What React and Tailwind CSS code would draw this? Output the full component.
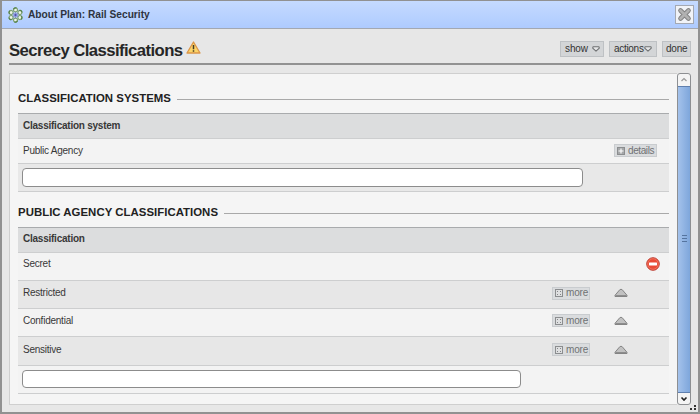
import React from "react";

function Flower() {
  const petals = [0, 60, 120, 180, 240, 300];
  return (
    <svg width="15" height="16" viewBox="-7.5 -8 15 16" className="shrink-0">
      {petals.map((a) => (
        <g key={a} transform={`rotate(${a})`}>
          <circle cx="0" cy="-5.1" r="2" fill="#eef5e8" stroke="#7fa274" strokeWidth="1.2" />
          <path d="M-1.9-5.6A2 2 0 0 1 1-6.9" fill="none" stroke="#54804b" strokeWidth="1.2" />
          <path d="M0-3.2V-1" stroke="#7486b8" strokeWidth="0.8" />
        </g>
      ))}
      <circle r="2" fill="#8a90d8" />
      <circle r="0.9" fill="#4c50a8" />
    </svg>
  );
}

function Warning() {
  return (
    <svg width="15" height="13" viewBox="0 0 15 13" className="shrink-0">
      <path d="M7.5 1L14 12H1Z" fill="#fcd569" stroke="#dc9648" strokeWidth="1.3" strokeLinejoin="round" />
      <path d="M7.5 4V8.3M7.5 9.3V10.8" stroke="#443a24" strokeWidth="1.5" />
    </svg>
  );
}

function DownTriangle() {
  return (
    <svg width="8" height="6" viewBox="0 0 8 6" className="shrink-0">
      <path d="M1 .8H7L7.3 2.1 4 5.2 .7 2.1Z" fill="#e6e7e8" stroke="#6f7173" strokeWidth="1.1" strokeLinejoin="round" />
    </svg>
  );
}

function UpTriangle() {
  return (
    <svg width="14" height="10" viewBox="0 0 14 10" className="shrink-0">
      <path d="M1 7.3L5.8 1.7Q7 .8 8.2 1.7L13 7.3V8.5H1Z" fill="#c1c1c1" stroke="#858585" strokeWidth="1" strokeLinejoin="round" />
      <path d="M1.5 7.6H12.5" stroke="#777" strokeWidth="0.8" />
    </svg>
  );
}

function PlusBox({ faint }) {
  return (
    <svg width="8" height="8" viewBox="0 0 8 8" className="shrink-0">
      <rect x=".5" y=".5" width="7" height="7" fill={faint ? "#dedfe0" : "#a5a7a9"} stroke="#8b8d8f" />
      {faint ? (
        <path d="M2 2.5H3M5 2.5H6M2 5.5H3M5 5.5H6" stroke="#85878a" strokeWidth="1" />
      ) : (
        <path d="M4 1.5V6.5M1.5 4H6.5" stroke="#fff" strokeWidth="1.1" />
      )}
    </svg>
  );
}

function SmallButton({ label, faint, className }) {
  return (
    <span className={`flex h-[13px] items-center gap-[3px] border border-[#c9cccf] bg-[#dadcde] pl-[2px] text-[10px] leading-[11px] text-[#707274] ${className}`}>
      <PlusBox faint={faint} />
      <span className="-mt-px">{label}</span>
    </span>
  );
}

function MenuButton({ label, arrow, className }) {
  return (
    <button className={`flex h-4 items-center justify-between border border-[#bec1c4] bg-[#d3d5d7] text-[10px] leading-[14px] text-[#333] ${className}`}>
      <span>{label}</span>
      {arrow && <DownTriangle />}
    </button>
  );
}

function SectionTitle({ children, className }) {
  return (
    <div className={`flex h-[14px] items-center gap-[6px] ${className}`}>
      <h2 className="-mt-px whitespace-nowrap text-[11.4px] font-bold leading-[13px] tracking-[0.03px] text-[#222]">{children}</h2>
      <div className="h-px grow bg-[#a9a9a9]" />
    </div>
  );
}

function Row({ label, className, children }) {
  return (
    <div className={`flex items-center border-b border-[#cdcecf] pl-[5px] ${className}`}>
      <span className="grow text-[10px] leading-3 tracking-[-0.24px] text-[#383838]">{label}</span>
      {children}
    </div>
  );
}

function MoreControls() {
  return (
    <div className="flex items-center pr-[41px]">
      <SmallButton label="more" faint className="mr-6 w-[38px] tracking-[-0.15px]" />
      <UpTriangle />
    </div>
  );
}

export default function App() {
  return (
    <div
      className="flex h-[414px] w-[700px] flex-col overflow-hidden border-2 border-t-1 border-[#919191] bg-[#e7e7e7]"
      style={{ fontFamily: '"Liberation Sans", Arial, sans-serif' }}
    >
      <header className="flex h-[28px] shrink-0 items-center border-b border-[#a3a8b2] bg-linear-to-b from-[#c5daff] to-[#aecbff] pl-[6px] pr-[4px]">
        <Flower />
        <span className="ml-[5px] grow pt-px text-[10.2px] font-bold leading-3 text-[#2e3440]">About Plan: Rail Security</span>
        <button className="flex h-[19px] w-[19px] items-center justify-center border border-[#a4a9b3] bg-[#f1f3f7]">
          <svg width="15" height="15" viewBox="0 0 15 15">
            <path d="M3.5 3.5L11.5 11.5M11.5 3.5L3.5 11.5" stroke="#818181" strokeWidth="4.6" strokeLinecap="round" />
            <path d="M3.5 3.5L11.5 11.5M11.5 3.5L3.5 11.5" stroke="#b1b1b1" strokeWidth="2.7" strokeLinecap="round" />
          </svg>
        </button>
      </header>

      <div className="mx-[7px] flex h-[36px] shrink-0 items-center border-b-2 border-[#929292] pt-[6px]">
        <h1 className="mr-[4px] w-[173px] whitespace-nowrap pt-[3px] text-[16.7px] font-bold leading-5 tracking-[-0.56px] text-[#262626]">Secrecy Classifications</h1>
        <div className="mb-1 grow">
          <Warning />
        </div>
        <div className="flex gap-[5px]">
          <MenuButton label="show" arrow className="w-[44px] pl-[4px] pr-[3px] tracking-[-0.1px]" />
          <MenuButton label="actions" arrow className="w-[48px] pl-[4px] pr-[4px] tracking-[-0.3px]" />
          <MenuButton label="done" className="w-[29px] pl-[3px] tracking-[-0.2px]" />
        </div>
      </div>

      <div className="mx-[7px] mt-[8px] flex h-[332px] shrink-0">
        <main className="grow border border-r-0 border-[#cfcfcf] bg-[#f5f5f5] pl-2 pr-[8px] pt-[18px]">
          <SectionTitle>CLASSIFICATION SYSTEMS</SectionTitle>
          <div className="mt-[7px] border-t border-[#a9abad]">
            <Row label={<b>Classification system</b>} className="h-[25px] border-[#a9abad] bg-[#dcddde] pb-px" />
            <Row label="Public Agency" className="h-[25px] bg-[#f3f3f3] pb-px">
              <SmallButton label="details" className="mr-[12px] w-[43px] tracking-[-0.4px]" />
            </Row>
            <div className="h-[28px] border-b border-[#cdcecf] bg-[#e8e8e8] pl-1 pt-[4px]">
              <input className="block h-[19px] w-[561px] rounded-[4px] border border-[#8c8c8c] bg-white" />
            </div>
          </div>

          <SectionTitle className="mt-[14px]">PUBLIC AGENCY CLASSIFICATIONS</SectionTitle>
          <div className="mt-[7px] border-t border-[#a9abad]">
            <Row label={<b>Classification</b>} className="h-[25px] border-[#a9abad] bg-[#dcddde] pb-[2px]" />
            <Row label="Secret" className="h-[28px] bg-[#f3f3f3] pb-[5px]">
              <svg width="14" height="14" viewBox="0 0 14 14" className="mr-[9px]">
                <circle cx="7" cy="7" r="6.3" fill="#ea4a36" stroke="#bd4238" strokeWidth="1" />
                <circle cx="7" cy="7" r="5.3" fill="none" stroke="#f2816c" strokeWidth="0.7" />
                <rect x="3" y="5.5" width="8" height="3" rx=".4" fill="#fff" />
              </svg>
            </Row>
            <Row label="Restricted" className="h-[28px] bg-[#e7e7e7] pb-[3px]">
              <MoreControls />
            </Row>
            <Row label="Confidential" className="h-[28px] bg-[#f3f3f3] pb-[4px]">
              <MoreControls />
            </Row>
            <Row label="Sensitive" className="h-[29px] bg-[#e7e7e7] pb-[3px]">
              <MoreControls />
            </Row>
            <div className="h-[28px] border-b border-[#cdcecf] bg-[#f3f3f3] pl-1 pt-[4px]">
              <input className="block h-[18px] w-[499px] rounded-[4px] border border-[#8c8c8c] bg-white" />
            </div>
          </div>
        </main>

        <div className="flex w-[14px] shrink-0 flex-col overflow-hidden rounded-[3px] border border-[#8d8f92] bg-[#f4f4f4]">
          <div className="flex h-[12px] shrink-0 items-center justify-center">
            <svg width="8" height="6" viewBox="0 0 8 6">
              <path d="M1.5 4L4 1.5 6.5 4" fill="none" stroke="#999" strokeWidth="1.2" />
            </svg>
          </div>
          <div className="flex grow flex-col items-center justify-center gap-[2px] border-y border-[#5f7fae] bg-linear-to-r from-[#a4c2eb] to-[#7ea6db] pb-[2px]">
            <div className="h-px w-[5px] bg-[#55749f]" />
            <div className="h-px w-[5px] bg-[#55749f]" />
            <div className="h-px w-[5px] bg-[#55749f]" />
          </div>
          <div className="flex h-[11px] shrink-0 items-center justify-center">
            <svg width="8" height="6" viewBox="0 0 8 6">
              <path d="M1.5 1.5L4 4 6.5 1.5" fill="none" stroke="#222" strokeWidth="1.6" />
            </svg>
          </div>
        </div>
      </div>

      <div className="flex justify-end pr-px">
        <svg width="7" height="7" viewBox="0 0 7 7">
          <path d="M4 0H6V2H4ZM4 3H6V5H4ZM0 3H2V5H0Z" fill="#333" />
        </svg>
      </div>
    </div>
  );
}
